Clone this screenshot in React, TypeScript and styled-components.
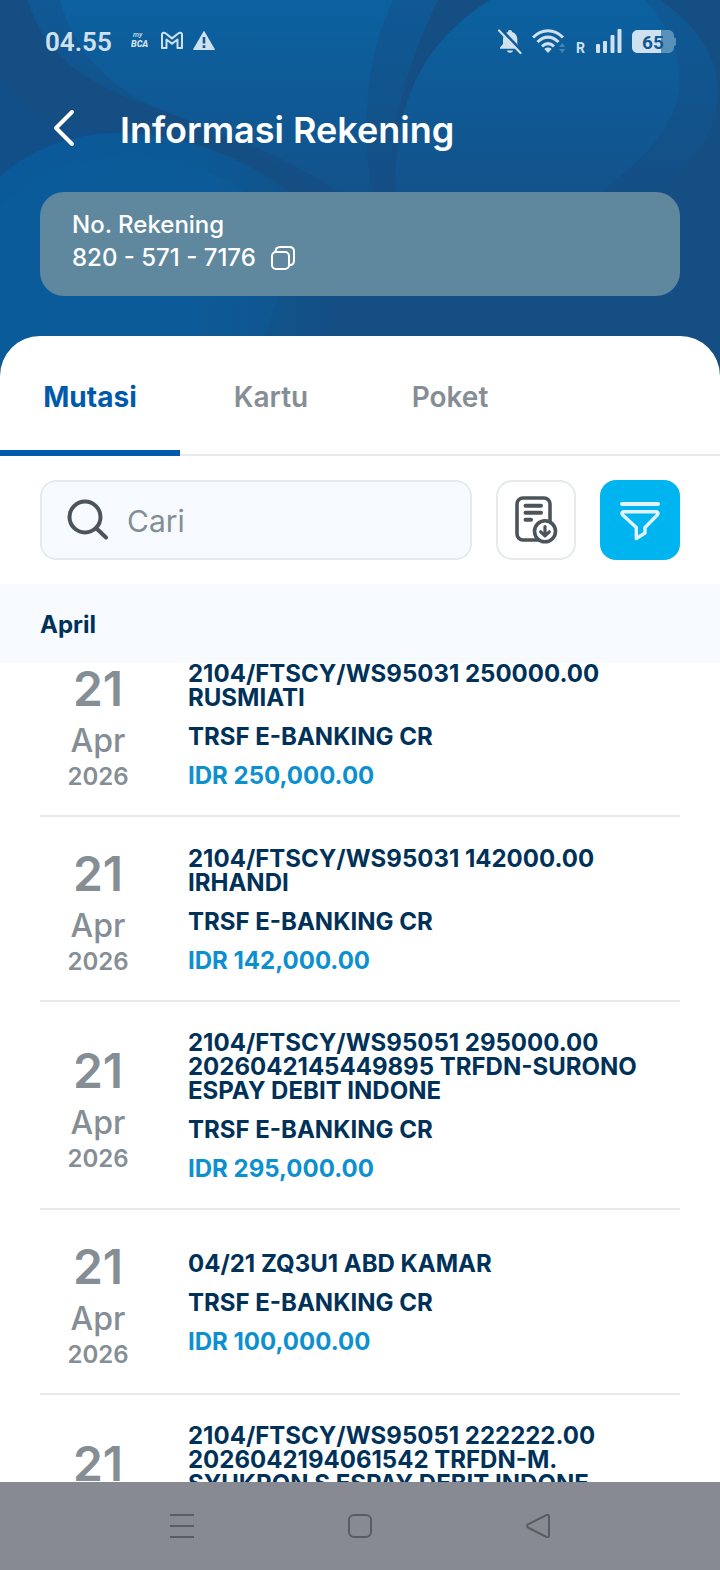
import React from 'react';
import styled, { createGlobalStyle } from 'styled-components';

const Global = createGlobalStyle`
  * { box-sizing: border-box; }
  body { margin: 0; background: #fff; }
  body, button, input { font-family: Inter, "Liberation Sans", sans-serif; }
  button { border: 0; padding: 0; margin: 0; background: none; cursor: pointer; display: flex; align-items: center; justify-content: center; }
  h1, h2, p { margin: 0; }
  svg { display: block; flex: none; }
`;

const Screen = styled.div`
  display: flex;
  flex-direction: column;
  height: 100vh;
  overflow: hidden;
  background: #144e82;
`;

const Hero = styled.header`
  position: relative;
  flex: none;
  margin-bottom: -40px;
  padding: 0 40px 80px;
  color: #fff;
`;

const Backdrop = styled.svg`
  position: absolute;
  inset: 0;
  width: 100%;
  height: 100%;
`;

const StatusBar = styled.div`
  position: relative;
  display: flex;
  align-items: center;
  justify-content: space-between;
  height: 84px;
  padding: 0 4px 0 5px;
  color: #cfe1ef;
`;

const StatusGroup = styled.div`
  display: flex;
  align-items: center;
  gap: 10px;
`;

const Clock = styled.time`
  width: 76px;
  font: 600 26px/32px Roboto, sans-serif;
`;

const TitleRow = styled.div`
  position: relative;
  display: flex;
  align-items: center;
  gap: 32px;
  height: 92px;
`;

const BackButton = styled.button`
  width: 48px;
  height: 48px;
`;

const Title = styled.h1`
  font-size: 36px;
  line-height: 48px;
  font-weight: 600;
`;

const AccountCard = styled.section`
  position: relative;
  height: 104px;
  margin-top: 16px;
  padding: 16px 32px;
  border-radius: 24px;
  background: #5f889f;
  font-size: 24px;
  line-height: 33px;
  font-weight: 500;
`;

const AccountNumber = styled.div`
  display: flex;
  align-items: center;
  gap: 15px;
`;

const Sheet = styled.main`
  position: relative;
  flex: 1;
  min-height: 0;
  display: flex;
  flex-direction: column;
  background: #fff;
  border-radius: 40px 40px 0 0;
  overflow: hidden;
`;

const Tabs = styled.nav`
  display: flex;
  flex: none;
  height: 120px;
  border-bottom: 2px solid #e7eaec;
`;

const Tab = styled.button<{ $active?: boolean; $width: number }>`
  width: ${p => p.$width}px;
  height: 120px;
  padding-top: 8px;
  border-bottom: 6px solid ${p => (p.$active ? '#005aab' : 'transparent')};
  color: ${p => (p.$active ? '#005aab' : '#858e95')};
  font-size: 28px;
  font-weight: ${p => (p.$active ? 700 : 600)};
`;

const Tools = styled.div`
  display: flex;
  flex: none;
  gap: 24px;
  padding: 24px 40px;
`;

const SearchBox = styled.label`
  flex: 1;
  min-width: 0;
  display: flex;
  align-items: center;
  gap: 17px;
  height: 80px;
  padding: 0 24px;
  border: 2px solid #e7eaec;
  border-radius: 16px;
  background: #f7fbff;
`;

const SearchInput = styled.input`
  flex: 1;
  min-width: 0;
  padding: 2px 0 0;
  border: 0;
  outline: 0;
  background: none;
  font-size: 30px;
  line-height: 40px;
  &::placeholder { color: #858e95; opacity: 1; }
`;

const ToolButton = styled.button<{ $filled?: boolean }>`
  width: 80px;
  height: 80px;
  flex: none;
  border-radius: 16px;
  border: 2px solid ${p => (p.$filled ? '#00b4f0' : '#e7eaec')};
  background: ${p => (p.$filled ? '#00b4f0' : '#fff')};
`;

const MonthHeading = styled.h2`
  flex: none;
  height: 79px;
  padding: 0 40px;
  background: #f7fbff;
  color: #003159;
  font-size: 24px;
  line-height: 82px;
  font-weight: 700;
`;

const Viewport = styled.div`
  flex: 1;
  min-height: 0;
  overflow: hidden auto;
  scrollbar-width: none;
`;

const List = styled.ul`
  margin: -31px 0 0;
  padding: 0 40px;
  list-style: none;
`;

const Entry = styled.li`
  display: flex;
  align-items: center;
  gap: 32px;
  padding: 29px 0 27px;
  border-bottom: 2px solid #e7eaec;
`;

const DateBlock = styled.time`
  display: flex;
  flex-direction: column;
  align-items: center;
  width: 116px;
  color: #858e95;
  font-weight: 600;
`;

const Day = styled.span`
  font-size: 48px;
  line-height: 56px;
`;

const Month = styled.span`
  font-size: 32px;
  line-height: 48px;
  font-weight: 500;
`;

const Year = styled.span`
  font-size: 24px;
  line-height: 23px;
`;

const Details = styled.div`
  flex: 1;
  min-width: 0;
  display: flex;
  flex-direction: column;
  gap: 15px;
  font-size: 24px;
  line-height: 24px;
  font-weight: 700;
  color: #003159;
`;

const Description = styled.p`
  white-space: pre-line;
`;

const Amount = styled.p`
  color: #0c90cf;
`;

const SystemNav = styled.nav`
  position: relative;
  flex: none;
  display: flex;
  justify-content: center;
  align-items: center;
  height: 88px;
  gap: 130px;
  background: #888a93;
`;

const NavButton = styled.button`
  width: 48px;
  height: 48px;
`;

function HeroBackdrop() {
  return (
    <Backdrop viewBox="0 0 720 376" preserveAspectRatio="none" aria-hidden="true">
      <defs>
        <linearGradient id="petal" x1="0" y1="0" x2="0" y2="1">
          <stop offset="0" stopColor="#0b61a0" />
          <stop offset="1" stopColor="#13528a" />
        </linearGradient>
        <linearGradient id="petalEdge" x1="0" y1="0" x2="0" y2="1">
          <stop offset="0" stopColor="#0f5995" />
          <stop offset="1" stopColor="#144e84" />
        </linearGradient>
        <linearGradient id="wave" gradientUnits="userSpaceOnUse" x1="0" y1="240" x2="350" y2="280">
          <stop offset="0" stopColor="#0a5999" />
          <stop offset="0.55" stopColor="#0c5996" />
          <stop offset="1" stopColor="#144e82" />
        </linearGradient>
      </defs>
      <rect width="720" height="376" fill="#144e82" />
      <path d="M0 72C24 116 60 132 120 132L0 178Z" fill="#124f88" />
      <path d="M28 0C44 58 92 86 150 106C225 133 268 150 305 192L393 192C389 125 407 64 438 0Z" fill="url(#petalEdge)" />
      <path d="M60 0C74 52 108 84 150 105C220 134 290 155 350 200L372 200C362 130 364 60 393 0Z" fill="url(#petal)" />
      <path d="M395 192C395 115 412 50 490 0L660 0C706 32 718 66 718 92C716 136 690 168 652 200L395 200Z" fill="url(#petalEdge)" />
      <path d="M395 192C395 115 412 50 490 0L645 0C672 30 682 60 679 92C672 136 632 168 590 200L395 200Z" fill="url(#petal)" />
      <path d="M0 176C40 142 84 132 130 133C220 140 290 178 345 250L330 376L0 376Z" fill="url(#wave)" />
      <path d="M34 180C66 162 100 156 140 157C210 163 266 196 300 240L250 376L0 376L0 205Z" fill="#0c5f9f" opacity="0.3" />
    </Backdrop>
  );
}

const BcaIcon = () => (
  <svg width="20" height="26" viewBox="0 0 20 26" fill="#cfe1ef" fontFamily="Roboto, sans-serif" fontStyle="italic">
    <text x="2" y="8" fontSize="7" fontWeight="500">my</text>
    <text x="0" y="18" fontSize="9" fontWeight="900">BCA</text>
  </svg>
);

const MailIcon = () => (
  <svg width="22" height="26" viewBox="0 0 22 26" fill="none" stroke="#cfe1ef" strokeWidth="2" strokeLinejoin="round">
    <path d="M1 19V5.5C1 3.5 3.2 3.2 4.5 4.3L11 9.4L17.5 4.3C18.8 3.2 21 3.5 21 5.5V19H16.5V10.5L11 14.8L5.500 10.5V19Z" />
  </svg>
);

const WarningIcon = () => (
  <svg width="22" height="26" viewBox="0 0 22 26">
    <path d="M11 2.500L21.500 20.500H0.500Z" fill="#cfe1ef" stroke="#cfe1ef" strokeLinejoin="round" />
    <path d="M11 8V14.500M11 16.300V19" stroke="#0f5893" strokeWidth="2.600" />
  </svg>
);

const BellOffIcon = () => (
  <svg width="24" height="26" viewBox="0 0 24 26">
    <path d="M12 1C13.300 1 14 1.800 14 3C17.500 4 19.300 6.700 19.300 10.500V15L21.500 18.500V19.800H2V18.500L5 15V10.500C5 6.700 6.600 4 10 3C10 1.800 10.700 1 12 1ZM9 21.500H15C14.700 23 13.600 23.700 12 23.700S9.300 23 9 21.500Z" fill="#cfe1ef" />
    <path d="M2.500 0L24 22.500" stroke="#0f5a96" strokeWidth="3" />
    <path d="M1 1.500L22.500 24" stroke="#cfe1ef" strokeWidth="2.200" strokeLinecap="round" />
  </svg>
);

const WifiIcon = () => (
  <svg width="34" height="26" viewBox="0 0 34 26" fill="none" stroke="#cfe1ef" strokeWidth="3">
    <path d="M1 8.500C10 -0.500 22 -0.500 31 8.500" />
    <path d="M5.500 13C12.500 6.500 19.500 6.500 26.500 13" />
    <path d="M10 17.300C14 13.700 18 13.700 22 17.300" />
    <path d="M12.300 20C14.500 18 17.500 18 19.700 20L16 24Z" fill="#cfe1ef" stroke="none" />
    <path d="M27 18L30.200 14L33.400 18ZM27 20L30.200 24L33.400 20Z" fill="#4482b1" stroke="none" />
  </svg>
);

const RoamingIcon = () => (
  <svg width="10" height="26" viewBox="0 0 10 26" fill="#cfe1ef" fontFamily="Roboto, sans-serif">
    <text x="0" y="24" fontSize="14" fontWeight="700">R</text>
  </svg>
);

const SignalIcon = () => (
  <svg width="26" height="26" viewBox="0 0 26 26" fill="#cfe1ef">
    <rect x="0" y="15" width="4" height="9" rx="1" />
    <rect x="7" y="12" width="4" height="12" rx="1" />
    <rect x="14.500" y="6" width="4" height="18" rx="1" />
    <rect x="21.500" y="0" width="4" height="24" rx="1" />
  </svg>
);

const BatteryIcon = () => (
  <svg width="44" height="26" viewBox="0 0 44 26">
    <path d="M29 1H36.500C39.500 1 42 3.500 42 6.500V8.500C43.300 8.500 44 9.300 44 10.500V15C44 16.200 43.300 17 42 17V18.500C42 21.500 39.500 24 36.500 24H29Z" fill="#5990ba" />
    <path d="M29 1H5.500C2.500 1 0 3.500 0 6.500V18.500C0 21.500 2.500 24 5.500 24H29Z" fill="#cfe1ef" />
    <text x="21" y="19.500" textAnchor="middle" fill="#0f5893" fontFamily="Roboto, sans-serif" fontSize="19" fontWeight="700">65</text>
  </svg>
);

const BackIcon = () => (
  <svg width="24" height="40" viewBox="0 0 24 40" fill="none" stroke="#fff" strokeWidth="4" strokeLinecap="round" strokeLinejoin="round">
    <path d="M20 2L4 18L20 34" />
  </svg>
);

const CopyIcon = () => (
  <svg width="24" height="24" viewBox="0 0 24 24" fill="none" stroke="#fff" strokeWidth="2">
    <rect x="1" y="6" width="17" height="17" rx="4" />
    <path d="M4.500 6C4.500 2.700 6 1 9 1H18.500C21.300 1 23 2.700 23 5.500V14.500C23 17.500 21.500 19.300 18 19.300" />
  </svg>
);

const SearchIcon = () => (
  <svg width="44" height="44" viewBox="0 0 44 44" fill="none" stroke="#4c545b" strokeWidth="4" strokeLinecap="round">
    <circle cx="19" cy="19" r="15.500" />
    <path d="M30.500 30.500L40 39.500" />
  </svg>
);

const StatementIcon = () => (
  <svg width="48" height="48" viewBox="0 0 48 48" fill="none" stroke="#4c545b" strokeWidth="4" strokeLinecap="round" strokeLinejoin="round">
    <rect x="5" y="2" width="33" height="42" rx="6" strokeWidth="3.600" />
    <path d="M13.500 9.700H29M13.500 16.700H29M13.500 23.700H19" />
    <circle cx="33" cy="35.300" r="10.500" fill="#fff" strokeWidth="3.600" />
    <path d="M33 30.500V39.500M28.700 35.800L33 39.800L37.300 35.800" strokeWidth="3.200" />
  </svg>
);

const FilterIcon = () => (
  <svg width="48" height="48" viewBox="0 0 48 48" fill="none" stroke="#e2f3fb" strokeWidth="4" strokeLinecap="round" strokeLinejoin="round">
    <path d="M6 8H42" />
    <path d="M8 15.700H40C42.300 15.700 42.500 17.500 41.500 18.800L29 31.500V37L20.300 42.500V31.500L6.500 18.800C5.500 17.500 5.700 15.700 8 15.700Z" strokeWidth="3.400" />
  </svg>
);

const MenuIcon = () => (
  <svg width="24" height="24" viewBox="0 0 24 24" stroke="#5b5c62" strokeWidth="2">
    <path d="M0 1H24M0 12H24M0 23H24" />
  </svg>
);

const HomeIcon = () => (
  <svg width="24" height="24" viewBox="0 0 24 24" fill="none" stroke="#5b5c62" strokeWidth="2">
    <rect x="1" y="1" width="22" height="22" rx="5" />
  </svg>
);

const TriangleIcon = () => (
  <svg width="24" height="24" viewBox="0 0 24 24" fill="none" stroke="#5b5c62" strokeWidth="2" strokeLinejoin="round">
    <path d="M2 10.300L20.500 1C21.800 0.500 23 1 23 2.500V21.500C23 23 21.800 23.500 20.500 23L2 13.500C0.700 12.700 0.700 11.200 2 10.300Z" />
  </svg>
);

const entries = [
  { text: '2104/FTSCY/WS95031 250000.00\nRUSMIATI', amount: 'IDR 250,000.00' },
  { text: '2104/FTSCY/WS95031 142000.00\nIRHANDI', amount: 'IDR 142,000.00' },
  { text: '2104/FTSCY/WS95051 295000.00\n2026042145449895 TRFDN-SURONO\nESPAY DEBIT INDONE', amount: 'IDR 295,000.00' },
  { text: '04/21 ZQ3U1 ABD KAMAR', amount: 'IDR 100,000.00' },
  { text: '2104/FTSCY/WS95051 222222.00\n2026042194061542 TRFDN-M.\nSYUKRON S ESPAY DEBIT INDONE', amount: 'IDR 222,222.00' },
];

export default function App() {
  return (
    <Screen>
      <Global />
      <Hero>
        <HeroBackdrop />
        <StatusBar>
          <StatusGroup>
            <Clock>04.55</Clock>
            <BcaIcon />
            <MailIcon />
            <WarningIcon />
          </StatusGroup>
          <StatusGroup>
            <BellOffIcon />
            <WifiIcon />
            <RoamingIcon />
            <SignalIcon />
            <BatteryIcon />
          </StatusGroup>
        </StatusBar>
        <TitleRow>
          <BackButton aria-label="Kembali"><BackIcon /></BackButton>
          <Title>Informasi Rekening</Title>
        </TitleRow>
        <AccountCard>
          <p>No. Rekening</p>
          <AccountNumber>
            820 - 571 - 7176
            <button aria-label="Salin nomor rekening"><CopyIcon /></button>
          </AccountNumber>
        </AccountCard>
      </Hero>
      <Sheet>
        <Tabs>
          <Tab $active $width={180}>Mutasi</Tab>
          <Tab $width={182}>Kartu</Tab>
          <Tab $width={176}>Poket</Tab>
        </Tabs>
        <Tools>
          <SearchBox>
            <SearchIcon />
            <SearchInput type="text" placeholder="Cari" aria-label="Cari" />
          </SearchBox>
          <ToolButton aria-label="Unduh mutasi"><StatementIcon /></ToolButton>
          <ToolButton $filled aria-label="Filter"><FilterIcon /></ToolButton>
        </Tools>
        <MonthHeading>April</MonthHeading>
        <Viewport>
          <List>
            {entries.map(entry => (
              <Entry key={entry.text}>
                <DateBlock dateTime="2026-04-21">
                  <Day>21</Day>
                  <Month>Apr</Month>
                  <Year>2026</Year>
                </DateBlock>
                <Details>
                  <Description>{entry.text}</Description>
                  <p>TRSF E-BANKING CR</p>
                  <Amount>{entry.amount}</Amount>
                </Details>
              </Entry>
            ))}
          </List>
        </Viewport>
      </Sheet>
      <SystemNav>
        <NavButton aria-label="Aplikasi terbaru"><MenuIcon /></NavButton>
        <NavButton aria-label="Beranda"><HomeIcon /></NavButton>
        <NavButton aria-label="Kembali ke layar sebelumnya"><TriangleIcon /></NavButton>
      </SystemNav>
    </Screen>
  );
}
